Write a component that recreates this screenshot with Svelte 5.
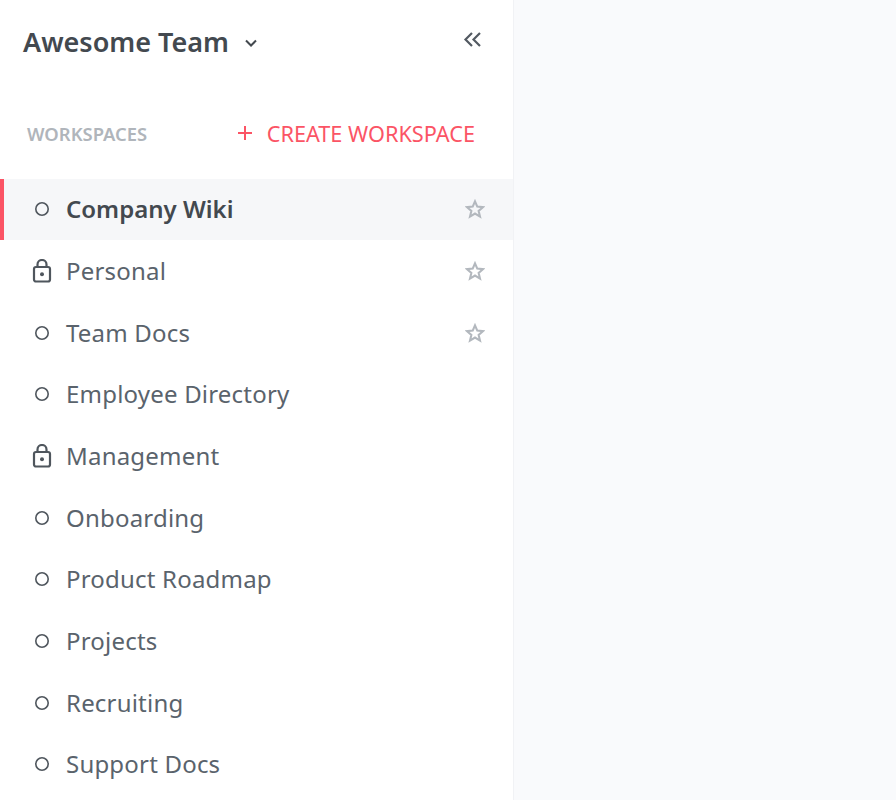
<script>
  const workspaces = [
    { name: 'Company Wiki', icon: 'circle', starred: true, active: true },
    { name: 'Personal', icon: 'lock', starred: true },
    { name: 'Team Docs', icon: 'circle', starred: true },
    { name: 'Employee Directory', icon: 'circle' },
    { name: 'Management', icon: 'lock' },
    { name: 'Onboarding', icon: 'circle' },
    { name: 'Product Roadmap', icon: 'circle' },
    { name: 'Projects', icon: 'circle' },
    { name: 'Recruiting', icon: 'circle' },
    { name: 'Support Docs', icon: 'circle' }
  ];
</script>

<div class="page">
  <aside class="sidebar">
    <header class="team">
      <div class="team-name">
        <span>Awesome Team</span>
        <svg class="chevron" width="14" height="10" viewBox="0 0 14 10" fill="none" stroke="currentColor" stroke-width="2">
          <path d="M2 2.5 L7 7.5 L12 2.5" />
        </svg>
      </div>
      <svg class="collapse" width="20" height="16" viewBox="0 0 20 16" fill="none" stroke="currentColor" stroke-width="2.2">
        <path d="M9 1 L2.5 7.5 L9 14" />
        <path d="M17 1 L10.5 7.5 L17 14" />
      </svg>
    </header>

    <div class="section">
      <span class="section-title">WORKSPACES</span>
      <button class="create">
        <svg width="16" height="16" viewBox="0 0 16 16" stroke="currentColor" stroke-width="2">
          <path d="M8 1 V15 M1 8 H15" />
        </svg>
        CREATE WORKSPACE
      </button>
    </div>

    <ul class="list">
      {#each workspaces as ws (ws.name)}
        <li class="item" class:active={ws.active}>
          <span class="icon">
            {#if ws.icon === 'lock'}
              <svg width="20" height="24" viewBox="0 0 20 24" fill="none" stroke="currentColor" stroke-width="2.2">
                <rect x="2" y="8" width="16" height="14.5" rx="2" />
                <path d="M5.5 8 V5.5 a4.5 4.5 0 0 1 9 0 V8" />
                <circle cx="10" cy="15.2" r="2" fill="currentColor" stroke="none" />
              </svg>
            {:else}
              <svg width="16" height="16" viewBox="0 0 16 16" fill="none" stroke="currentColor" stroke-width="1.6">
                <circle cx="8" cy="8" r="6.2" />
              </svg>
            {/if}
          </span>
          <span class="name">{ws.name}</span>
          {#if ws.starred}
            <svg class="star" width="20" height="20" viewBox="0 0 22 22" fill="none" stroke="currentColor" stroke-width="2.3" stroke-linejoin="miter">
              <path d="M11 2.6 L13.5 8.4 L19.8 9 L15 13.1 L16.5 19.3 L11 16 L5.5 19.3 L7 13.1 L2.2 9 L8.5 8.4 Z" />
            </svg>
          {/if}
        </li>
      {/each}
    </ul>
  </aside>
  <main class="content"></main>
</div>

<style>
  :global(body) {
    margin: 0;
  }

  .page {
    display: flex;
    height: 800px;
    overflow: hidden;
    background: #f9fafc;
    font-family: 'Noto Sans', sans-serif;
  }

  .sidebar {
    width: 513px;
    flex: none;
    background: #fff;
    border-right: 1px solid #f1f2f5;
  }

  .content {
    flex: 1;
  }

  .team {
    display: flex;
    justify-content: space-between;
    align-items: center;
    box-sizing: border-box;
    height: 84px;
    padding: 0 30px 2px 23px;
  }

  .team-name {
    display: flex;
    align-items: center;
    gap: 15px;
    font-size: 27px;
    font-weight: 600;
    color: #43494f;
  }

  .chevron {
    margin-top: 3px;
    color: #43494f;
  }

  .collapse {
    margin-top: -3px;
    color: #535a62;
  }

  .section {
    display: flex;
    justify-content: space-between;
    align-items: center;
    height: 32px;
    margin-top: 33px;
    padding: 0 38px 0 27px;
  }

  .section-title {
    font-size: 18.4px;
    font-weight: 600;
    color: #b0b5bb;
  }

  .create {
    display: flex;
    align-items: center;
    gap: 14px;
    padding: 0;
    border: none;
    background: none;
    font-family: inherit;
    font-size: 21.7px;
    color: #fb5465;
  }

  .list {
    list-style: none;
    margin: 29.6px 0 0;
    padding: 0;
  }

  .item {
    display: flex;
    align-items: center;
    height: 61.67px;
    padding: 0 28px 0 32px;
    box-sizing: border-box;
    font-size: 24px;
    letter-spacing: 0.2px;
    color: #5a636c;
  }

  .item.active {
    background: #f6f7f9;
    box-shadow: inset 4px 0 0 #fb5465;
    color: #43494f;
    font-weight: 600;
    letter-spacing: 0;
  }

  .icon {
    display: flex;
    justify-content: center;
    width: 20px;
    margin-right: 14px;
    color: #4f565d;
  }

  .name {
    flex: 1;
    margin-top: -1px;
  }

  .star {
    color: #b3b8be;
  }
</style>
